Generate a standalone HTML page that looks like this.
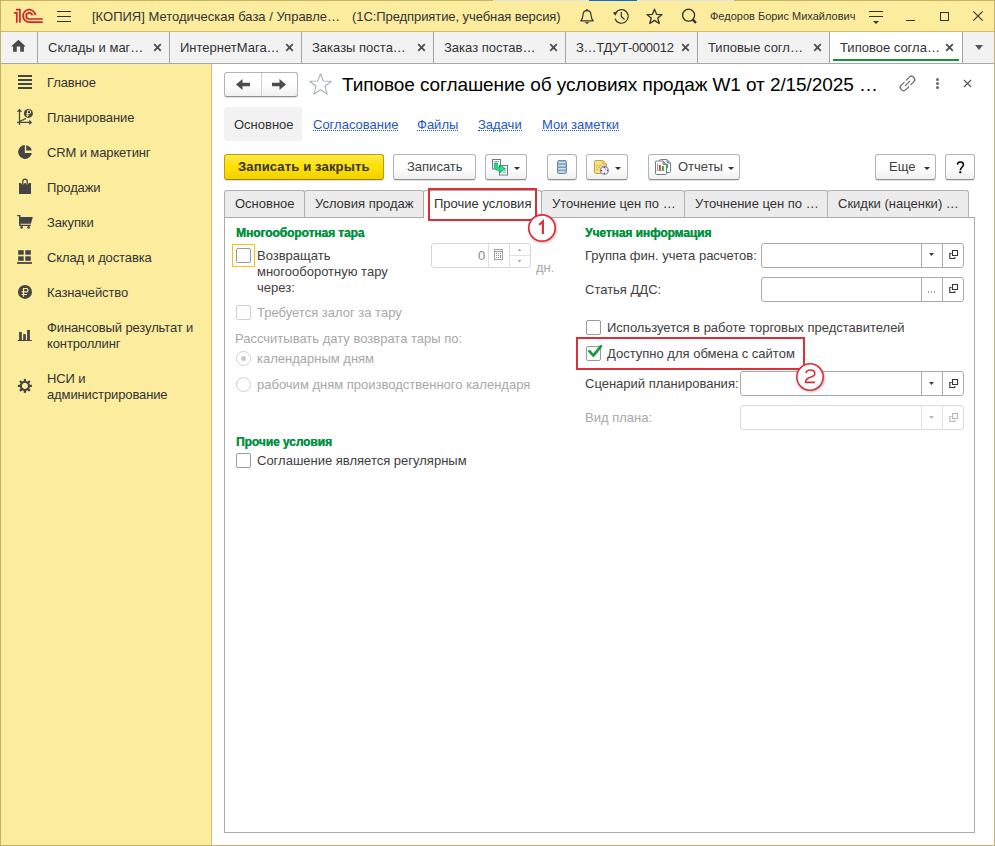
<!DOCTYPE html>
<html><head><meta charset="utf-8">
<style>
*{box-sizing:border-box;margin:0;padding:0}
html,body{width:995px;height:846px;overflow:hidden;background:#fff}
body{position:relative;font-family:"Liberation Sans",sans-serif;font-size:13px;color:#404040}
.a{position:absolute}
.t{position:absolute;white-space:nowrap;line-height:16px}
svg{position:absolute;overflow:visible}
#titlebar{left:0;top:0;width:995px;height:31px;background:#fbec9e}
#tabbar{left:1px;top:31px;width:993px;height:33px;background:#f2f2f2;border-top:1px solid #cdbc6e;border-bottom:1px solid #a8a8a8}
.sep{position:absolute;top:32px;width:1px;height:31px;background:#a3a3a3}
#sidebar{left:1px;top:64px;width:211px;height:781px;background:#fbec9e;border-right:1px solid #d2c27a}
.side{color:#333;letter-spacing:-0.12px}
.tab{color:#333}
.x{position:absolute;width:8px;height:8px}

.btn{border:1px solid #b4b4b4;border-bottom-color:#8f8f8f;border-radius:3px;background:linear-gradient(#fff 0%,#fff 50%,#f0f0f0 100%);box-shadow:0 1px 0 rgba(0,0,0,0.12)}
.ybtn{border:1px solid #b9a000;border-bottom-color:#9a8500;border-radius:3px;background:linear-gradient(#fee94e 0%,#ffe000 50%,#f2d100 100%);box-shadow:0 1px 0 rgba(0,0,0,0.12)}
.dot{width:3px;height:3px;border-radius:50%;background:#6a6a6a}
.lnk{color:#2457c4;border-bottom:1px dotted #2457c4;line-height:16px;height:14px}
.ftab{background:#ececec;border:1px solid #b0b0b0;border-bottom:none;border-radius:3px 3px 0 0}
.grp{color:#00923f;font-weight:bold;font-size:12px;letter-spacing:-0.08px;text-shadow:0.3px 0 0 #00923f}
.cb{width:15px;height:15px;border:1px solid #9a9a9a;border-radius:2px;background:#fff}
.dcb{border-color:#d0d0d0}
.rad{width:15px;height:15px;border:1px solid #d0d0d0;border-radius:50%;background:#fff}
.dis{color:#a8a8a8}
.fld{border:1px solid #a9a9a9;border-radius:3px;background:#fff}
.circ{width:28px;height:28px;border:2px solid #d9303a;border-radius:50%;background:#fff;box-shadow:1px 1px 2px rgba(0,0,0,0.25);color:#d9303a;font-size:18px;line-height:24px;text-align:center}
</style></head><body>
<!-- title bar -->
<div id="titlebar" class="a"></div>
<svg style="left:0;top:0" width="50" height="30" viewBox="0 0 50 30">
  <g fill="none" stroke="#d9232a" stroke-width="1.7">
    <path d="M14 12.8 H16.8 V22.8 M16 9.7 H19.9 V22.8"/>
    <path d="M35.4 15.1 A6.2 6.2 0 1 0 29.2 22.1 H42.8"/>
    <path d="M32.3 15.4 A3.1 3.1 0 1 0 29.2 19 H42.8"/>
  </g>
</svg>
<div class="a" style="left:57px;top:11px;width:14px;height:1px;background:#333"></div>
<div class="a" style="left:57px;top:16px;width:14px;height:1px;background:#333"></div>
<div class="a" style="left:57px;top:21px;width:14px;height:1px;background:#333"></div>
<div class="t" style="left:92px;top:9px;color:#333">[КОПИЯ] Методическая база / Управле…</div>
<div class="t" style="left:352px;top:9px;color:#333;letter-spacing:-0.08px">(1С:Предприятие, учебная версия)</div>
<!-- bell -->
<svg style="left:578px;top:8px" width="18" height="18" viewBox="0 0 18 18">
  <path d="M2.8 12.8 C4 11.5 4.8 10 4.9 7.5 C5 4.6 6.8 2.6 9 2.6 C11.2 2.6 13 4.6 13.1 7.5 C13.2 10 14 11.5 15.2 12.8 Z" fill="none" stroke="#333" stroke-width="1.2" stroke-linejoin="round"/>
  <path d="M8.3 1 h1.4 v2 h-1.4z M6.4 14.2 H11.6 L9 16 Z" fill="#333"/>
</svg>
<!-- history -->
<svg style="left:612px;top:8px" width="18" height="18" viewBox="0 0 18 18">
  <path d="M3.01 10.73 A6.8 6.8 0 1 0 3.83 4.5" fill="none" stroke="#333" stroke-width="1.2"/>
  <path d="M0.9 4.5 L5.6 3.8 L3.3 7.8 Z" fill="#333"/>
  <path d="M9.3 4 V8.5 L12.5 11.5" fill="none" stroke="#333" stroke-width="1.2"/>
</svg>
<!-- star -->
<svg style="left:646px;top:8px" width="18" height="18" viewBox="0 0 18 18">
  <path d="M8.5 1.2 L10.6 6.3 L16 6.6 L11.8 10 L13.2 15.5 L8.5 12.4 L3.8 15.5 L5.2 10 L1 6.6 L6.4 6.3 Z" fill="none" stroke="#333" stroke-width="1.3" stroke-linejoin="round"/>
</svg>
<!-- search -->
<svg style="left:681px;top:8px" width="18" height="18" viewBox="0 0 18 18">
  <circle cx="7.6" cy="7.2" r="6" fill="none" stroke="#333" stroke-width="1.3"/>
  <path d="M11.8 11.6 L15 14.8" stroke="#333" stroke-width="2.4"/>
</svg>
<div class="t" style="left:710px;top:8px;font-size:11px;color:#333">Федоров Борис Михайлович</div>
<!-- filter -->
<svg style="left:868px;top:8px" width="18" height="18" viewBox="0 0 18 18">
  <path d="M1 3.5 H15 M1 8.5 H15" stroke="#333" stroke-width="1.1"/>
  <path d="M5 13 H11 L8 16z" fill="#333"/>
</svg>
<div class="a" style="left:906px;top:20px;width:9px;height:1px;background:#333"></div>
<div class="a" style="left:940px;top:12px;width:9px;height:9px;border:1px solid #333"></div>
<svg style="left:972px;top:10px" width="12" height="12" viewBox="0 0 12 12">
  <path d="M1.3 1.3 L10.7 10.7 M10.7 1.3 L1.3 10.7" stroke="#333" stroke-width="1.1"/>
</svg>

<!-- tab bar -->
<div id="tabbar" class="a"></div>
<div class="sep" style="left:37px"></div>
<div class="sep" style="left:169px"></div>
<div class="sep" style="left:301px"></div>
<div class="sep" style="left:433px"></div>
<div class="sep" style="left:565px"></div>
<div class="sep" style="left:697px"></div>
<div class="sep" style="left:829px"></div>
<div class="sep" style="left:962px"></div>
<div class="a" style="left:830px;top:32px;width:132px;height:31px;background:#fff"></div>
<div class="a" style="left:833px;top:59px;width:126px;height:2px;background:#14923a"></div>
<svg style="left:0;top:32px" width="37" height="31" viewBox="0 0 37 31">
  <path d="M18.4 7.8 L25.8 14.6 H23.9 V19.7 H20.2 V14.6 H16.8 V19.7 H13.1 V14.6 H11 Z" fill="#4a4a4a"/>
</svg>
<div class="t tab" style="left:48px;top:40px">Склады и маг…</div>
<div class="t tab" style="left:180px;top:40px">ИнтернетМага…</div>
<div class="t tab" style="left:312px;top:40px">Заказы поста…</div>
<div class="t tab" style="left:444px;top:40px">Заказ постав…</div>
<div class="t tab" style="left:576px;top:40px;letter-spacing:-0.27px">З…ТДУТ-000012</div>
<div class="t tab" style="left:708px;top:40px">Типовые согл…</div>
<div class="t tab" style="left:840px;top:40px">Типовое согла…</div>
<svg style="left:0;top:0" width="995" height="64" viewBox="0 0 995 64">
  <g stroke="#4d4d4d" stroke-width="1.8">
    <path d="M154.2 44.2 L160.8 50.8 M160.8 44.2 L154.2 50.8"/>
    <path d="M286.2 44.2 L292.8 50.8 M292.8 44.2 L286.2 50.8"/>
    <path d="M418.2 44.2 L424.8 50.8 M424.8 44.2 L418.2 50.8"/>
    <path d="M550.2 44.2 L556.8 50.8 M556.8 44.2 L550.2 50.8"/>
    <path d="M682.2 44.2 L688.8 50.8 M688.8 44.2 L682.2 50.8"/>
    <path d="M814.2 44.2 L820.8 50.8 M820.8 44.2 L814.2 50.8"/>
    <path d="M946.2 44.2 L952.8 50.8 M952.8 44.2 L946.2 50.8"/>
  </g>
  <path d="M975 45 H983 L979 50z" fill="#555"/>
</svg>

<!-- sidebar -->
<div id="sidebar" class="a"></div>

<svg style="left:0;top:0" width="212" height="420" viewBox="0 0 212 420">
 <g fill="#444">
  <rect x="18" y="75" width="14" height="2"/><rect x="18" y="79" width="14" height="2"/>
  <rect x="18" y="83" width="14" height="2"/><rect x="18" y="87" width="14" height="2"/>
 </g>
 <!-- planning -->
 <g stroke="#444" stroke-width="1.2" fill="none">
  <path d="M19.5 111 V125 M17 122.4 H30"/>
  <path d="M20 120.8 L21.5 120.8 L22.5 119.8 L23.5 119.8 L24.5 118.8 L26 118.8"/>
 </g>
 <path d="M19.5 108.8 L22.2 111.8 H16.8 Z M32.2 122.4 L29.2 119.8 V125 Z" fill="#444"/>
 <circle cx="28.4" cy="113.4" r="4.5" fill="#444"/>
 <path d="M27.4 117 V110.6 H29.2 A1.5 1.5 0 0 1 29.2 113.6 H26.3 M26.3 115.2 H29.2" stroke="#fbec9e" stroke-width="0.9" fill="none"/>
 <!-- pie -->
 <path d="M24.8 145.1 A6.9 6.9 0 1 0 31.84 152.9 H24.8 Z" fill="#444"/>
 <path d="M26.2 145.2 A6.9 6.9 0 0 1 31.76 150.6 H26.2 Z" fill="#444"/>
 <!-- bag -->
 <path d="M19 183 H31 V194 H19 Z" fill="#444"/>
 <circle cx="22.8" cy="183.3" r="1.3" fill="#fbec9e"/><circle cx="27.2" cy="183.3" r="1.3" fill="#fbec9e"/>
 <path d="M22.8 184.6 V181.3 A2.2 2.2 0 0 1 27.2 181.3 V184.6" stroke="#444" stroke-width="1.3" fill="none"/>
 <!-- cart -->
 <path d="M17.1 215.6 H19.8 V225.4 H30.8" stroke="#444" stroke-width="1.4" fill="none"/>
 <path d="M19.2 217.1 H32.8 L30.9 223.7 H19.2 Z" fill="#444"/>
 <circle cx="21.6" cy="227.4" r="1.35" fill="#444"/><circle cx="28.6" cy="227.4" r="1.35" fill="#444"/>
 <!-- warehouse -->
 <g fill="#444">
  <rect x="18.2" y="250.2" width="5.5" height="4.5"/><rect x="25.3" y="250.2" width="5.5" height="4.5"/>
  <rect x="18.2" y="256.3" width="5.5" height="4.5"/><rect x="25.3" y="256.3" width="5.5" height="4.5"/>
  <rect x="17.1" y="262.1" width="14.8" height="1.8"/>
 </g>
 <!-- ruble -->
 <circle cx="25" cy="291.9" r="7" fill="#444"/>
 <path d="M23.5 296.8 V288.5 H26.4 A1.65 1.65 0 0 1 26.4 291.8 H21.6 M21.6 294.5 H26.9" stroke="#fbec9e" stroke-width="1.2" fill="none"/>
 <!-- chart -->
 <g fill="#444">
  <rect x="19.1" y="332" width="2.7" height="8.6"/><rect x="23.2" y="334.1" width="2.6" height="6.5"/>
  <rect x="27.1" y="329.9" width="2.8" height="10.7"/><rect x="17.9" y="340" width="14" height="1"/>
 </g>
 <!-- gear -->
 <g transform="translate(24.9 385.9)" fill="#444">
  <circle r="4.1" fill="none" stroke="#444" stroke-width="2.1"/>
  <rect x="-1.1" y="-7" width="2.2" height="3" />
  <rect x="-1.1" y="-7" width="2.2" height="3" transform="rotate(45)"/>
  <rect x="-1.1" y="-7" width="2.2" height="3" transform="rotate(90)"/>
  <rect x="-1.1" y="-7" width="2.2" height="3" transform="rotate(135)"/>
  <rect x="-1.1" y="-7" width="2.2" height="3" transform="rotate(180)"/>
  <rect x="-1.1" y="-7" width="2.2" height="3" transform="rotate(225)"/>
  <rect x="-1.1" y="-7" width="2.2" height="3" transform="rotate(270)"/>
  <rect x="-1.1" y="-7" width="2.2" height="3" transform="rotate(315)"/>
 </g>
</svg>
<div class="t side" style="left:47px;top:75px">Главное</div>
<div class="t side" style="left:47px;top:110px">Планирование</div>
<div class="t side" style="left:47px;top:145px">CRM и маркетинг</div>
<div class="t side" style="left:47px;top:180px">Продажи</div>
<div class="t side" style="left:47px;top:215px">Закупки</div>
<div class="t side" style="left:47px;top:250px">Склад и доставка</div>
<div class="t side" style="left:47px;top:285px">Казначейство</div>
<div class="t side" style="left:47px;top:320px">Финансовый результат и<br>контроллинг</div>
<div class="t side" style="left:47px;top:371px">НСИ и<br>администрирование</div>


<!-- ===== FORM ===== -->
<!-- nav buttons -->
<div class="a btn" style="left:224px;top:72px;width:74px;height:25px"></div>
<div class="a" style="left:261px;top:73px;width:1px;height:23px;background:#d0d0d0"></div>
<svg style="left:224px;top:72px" width="74" height="25" viewBox="0 0 74 25">
  <path d="M12 12.5 L18.5 7 V10.8 H26 V14.2 H18.5 V18 Z" fill="#4d4d4d"/>
  <path d="M62 12.5 L55.5 7 V10.8 H48 V14.2 H55.5 V18 Z" fill="#4d4d4d"/>
</svg>
<svg style="left:308px;top:72px" width="26" height="26" viewBox="0 0 26 26">
  <path d="M12.5 1.8 L15.3 9 L23.3 9.3 L17 14.3 L19.2 22.2 L12.5 17.7 L5.8 22.2 L8 14.3 L1.7 9.3 L9.7 9 Z" fill="none" stroke="#a9b2bb" stroke-width="1.1" stroke-linejoin="round"/>
</svg>
<div class="t" style="left:342px;top:73px;font-size:19px;line-height:24px;color:#000;letter-spacing:-0.08px">Типовое соглашение об условиях продаж W1 от 2/15/2025 …</div>
<svg style="left:898px;top:74px" width="19" height="19" viewBox="0 0 19 19">
  <g fill="none" stroke="#666" stroke-width="1.2" stroke-linecap="round">
    <path d="M8.3 6.2 L11.2 3.3 A2.8 2.8 0 0 1 15.7 7.8 L12.8 10.7"/>
    <path d="M10.7 12.8 L7.8 15.7 A2.8 2.8 0 0 1 3.3 11.2 L6.2 8.3"/>
    <path d="M7.3 11.7 L11.7 7.3"/>
  </g>
</svg>
<div class="a dot" style="left:936px;top:78px"></div>
<div class="a dot" style="left:936px;top:82px"></div>
<div class="a dot" style="left:936px;top:86px"></div>
<svg style="left:963px;top:79px" width="9" height="9" viewBox="0 0 9 9">
  <path d="M1 1 L8 8 M8 1 L1 8" stroke="#555" stroke-width="1.1"/>
</svg>

<!-- nav panel -->
<div class="a" style="left:224px;top:107px;width:78px;height:34px;background:#f2f2f2;border-radius:3px"></div>
<div class="t" style="left:234px;top:117px;color:#333">Основное</div>
<div class="t lnk" style="left:313px;top:117px">Согласование</div>
<div class="t lnk" style="left:417px;top:117px">Файлы</div>
<div class="t lnk" style="left:478px;top:117px">Задачи</div>
<div class="t lnk" style="left:542px;top:117px">Мои заметки</div>

<!-- command bar -->
<div class="a ybtn" style="left:224px;top:154px;width:160px;height:26px"></div>
<div class="t" style="left:238px;top:159px;font-weight:bold;color:#333;letter-spacing:0.15px">Записать и закрыть</div>
<div class="a btn" style="left:393px;top:154px;width:83px;height:26px"></div>
<div class="t" style="left:407px;top:159px;color:#404040">Записать</div>
<div class="a btn" style="left:485px;top:154px;width:42px;height:26px"></div>
<div class="a btn" style="left:547px;top:154px;width:30px;height:26px"></div>
<div class="a btn" style="left:586px;top:154px;width:42px;height:26px"></div>
<div class="a btn" style="left:648px;top:154px;width:92px;height:26px"></div>
<div class="t" style="left:678px;top:159px;color:#404040">Отчеты</div>
<div class="a btn" style="left:875px;top:154px;width:61px;height:26px"></div>
<div class="t" style="left:889px;top:159px;color:#404040">Еще</div>
<div class="a btn" style="left:945px;top:154px;width:30px;height:26px"></div>
<svg style="left:0;top:0" width="995" height="200" viewBox="0 0 995 200"><path d="M957.4 164.6 Q957.6 161.9 960.4 161.9 Q963.4 161.9 963.4 164.5 Q963.4 166.2 961.6 167.7 Q960.3 168.9 960.3 170.2" fill="none" stroke="#000" stroke-width="1.5"/><rect x="959.3" y="171.3" width="2" height="1.9" fill="#000"/></svg>
<svg style="left:0;top:0" width="995" height="200" viewBox="0 0 995 200">
  <path d="M514 167 H520 L517 170z M615 167 H621 L618 170z M728 167 H734 L731 170z M924 167 H930 L927 170z" fill="#333"/>
  <!-- copy-ish icon -->
  <rect x="492.5" y="159.5" width="8" height="9.5" fill="#fff" stroke="#6a7a8c" stroke-width="1"/>
  <rect x="499.5" y="165.5" width="8" height="9.5" fill="#fff" stroke="#6a7a8c" stroke-width="1"/>
  <path d="M494 161.5 H499 M503.8 168.5 H506.2 M503.8 170.5 H506.2 M502.8 172.5 H506.2" stroke="#8a98a8" stroke-width="0.8"/>
  <path d="M494.3 163 H497.6 V166.3 Q497.6 167.3 498.8 167.3 H500 V164.6 L505.4 168.7 L500 172.8 V170.4 H498.4 Q494.3 170.4 494.3 166.4 Z" fill="#22dd80" stroke="#17a55e" stroke-width="0.7"/>
  <!-- list icon -->
  <rect x="557.5" y="160.5" width="9" height="13" rx="1.6" fill="#7f9db8" stroke="#6a8aa8" stroke-width="1"/>
  <g fill="#cfe1ef"><rect x="558.3" y="161.6" width="7.4" height="1.6"/><rect x="558.3" y="164.8" width="7.4" height="1.6"/><rect x="558.3" y="168" width="7.4" height="1.6"/><rect x="558.3" y="171.2" width="7.4" height="1.6"/></g>
  <!-- report clock icon -->
  <path d="M594.5 172.5 V161.5 Q594.5 160.5 595.5 160.5 H603 L606.5 164 V172.5 Q606.5 173.5 605.5 173.5 H595.5 Q594.5 173.5 594.5 172.5 Z" fill="#f6e08c" stroke="#c9a43c" stroke-width="1"/>
  <path d="M603 160.8 V163.2 Q603 164 603.8 164 H606.2" fill="#f0d98a" stroke="#c9a43c" stroke-width="0.9"/>
  <path d="M596 165.6 H598 M599 165.6 H601.5 M596 167.6 H597 M598 167.6 H600 M596 169.6 H598.5" stroke="#d4b050" stroke-width="0.9"/>
  <circle cx="604.4" cy="170.4" r="3.9" fill="#fff" stroke="#6d94c2" stroke-width="1.3"/>
  <path d="M604.4 170.6 L605.6 167.6 L606.4 169.4 Z" fill="#8aa8d8"/>
  <g fill="#e01818"><circle cx="604.4" cy="167.5" r="0.75"/><circle cx="604.4" cy="173.3" r="0.75"/><circle cx="601.5" cy="170.4" r="0.75"/><circle cx="607.3" cy="170.4" r="0.75"/></g>
  <!-- reports icon -->
  <path d="M659.5 171.5 V160.5 Q659.5 159.5 660.5 159.5 H667 L670.5 163 V171.5 Q670.5 172.5 669.5 172.5 H660.5 Q659.5 172.5 659.5 171.5 Z" fill="#fff" stroke="#6f7d8c" stroke-width="1"/>
  <path d="M667 159.8 V162.2 Q667 163 667.8 163 H670.2" fill="#9aa6b2" stroke="#6f7d8c" stroke-width="0.9"/>
  <rect x="666.3" y="164" width="1.7" height="4.2" fill="#3aa03a"/>
  <path d="M655.5 173.5 V162 Q655.5 161 656.5 161 H663 L666.5 164.5 V173.5 Q666.5 174.5 665.5 174.5 H656.5 Q655.5 174.5 655.5 173.5 Z" fill="#fff" stroke="#6f7d8c" stroke-width="1"/>
  <path d="M663 161.3 V163.7 Q663 164.5 663.8 164.5 H666.2" fill="#9aa6b2" stroke="#6f7d8c" stroke-width="0.9"/>
  <path d="M657.5 163.5 V170.5 H664.5" fill="none" stroke="#8a8a8a" stroke-width="0.8"/>
  <rect x="659" y="165" width="1.8" height="5.2" fill="#e83a2a"/>
  <rect x="662" y="166" width="1.8" height="4.2" fill="#30a030"/>
</svg>

<!-- form tabs -->
<div class="a ftab" style="left:224px;top:190px;width:81px;height:28px"></div>
<div class="a ftab" style="left:304px;top:190px;width:120px;height:28px"></div>
<div class="a ftab" style="left:541px;top:190px;width:144px;height:28px"></div>
<div class="a ftab" style="left:684px;top:190px;width:144px;height:28px"></div>
<div class="a ftab" style="left:827px;top:190px;width:142px;height:28px"></div>
<div class="a" style="left:224px;top:217px;width:751px;height:616px;border:1px solid #acacac"></div>
<div class="a" style="left:423px;top:190px;width:119px;height:28px;background:#fff;border:1px solid #acacac;border-bottom:none;border-radius:3px 3px 0 0"></div>
<div class="t" style="left:235px;top:196px;color:#333">Основное</div>
<div class="t" style="left:315px;top:196px;color:#333">Условия продаж</div>
<div class="t" style="left:434px;top:196px;color:#333">Прочие условия</div>
<div class="t" style="left:552px;top:196px;color:#333">Уточнение цен по …</div>
<div class="t" style="left:695px;top:196px;color:#333">Уточнение цен по …</div>
<div class="t" style="left:838px;top:196px;color:#333">Скидки (наценки) …</div>

<!-- left column -->
<div class="t grp" style="left:236px;top:225px">Многооборотная тара</div>
<div class="a" style="left:232px;top:244px;width:23px;height:23px;border:1px solid #f5c300"></div>
<div class="a cb" style="left:236px;top:248px"></div>
<div class="t" style="left:257px;top:248px">Возвращать<br>многооборотную тару<br>через:</div>
<div class="a" style="left:431px;top:243px;width:100px;height:25px;border:1px solid #d6d6d6;border-radius:3px"></div>
<div class="a" style="left:488px;top:244px;width:1px;height:23px;background:#e0e0e0"></div>
<div class="a" style="left:509px;top:244px;width:1px;height:23px;background:#e0e0e0"></div>
<div class="a" style="left:510px;top:255px;width:20px;height:1px;background:#e0e0e0"></div>
<div class="t" style="left:478px;top:248px;color:#888">0</div>
<svg style="left:0;top:0" width="600" height="300" viewBox="0 0 600 300">
  <rect x="494.5" y="249.5" width="8" height="10" fill="none" stroke="#a0a0a0" stroke-width="1"/>
  <path d="M495 251.5 H502" stroke="#a0a0a0" stroke-width="1.2"/>
  <g fill="#8c8c8c"><rect x="496" y="253" width="1" height="1"/><rect x="498" y="253" width="1" height="1"/><rect x="500" y="253" width="1" height="1"/><rect x="496" y="255" width="1" height="1"/><rect x="498" y="255" width="1" height="1"/><rect x="500" y="255" width="1" height="3"/><rect x="496" y="257" width="1" height="1"/><rect x="498" y="257" width="1" height="1"/></g>
  <path d="M517.6 251 H521.4 L519.5 248.8 Z M517.6 260 H521.4 L519.5 262.2 Z" fill="#a4a4a4"/>
</svg>
<div class="t dis" style="left:536px;top:260px">дн.</div>
<div class="a cb dcb" style="left:236px;top:305px"></div>
<div class="t dis" style="left:257px;top:305px">Требуется залог за тару</div>
<div class="t dis" style="left:235px;top:331px">Рассчитывать дату возврата тары по:</div>
<div class="a rad" style="left:236px;top:351px"></div>
<div class="a" style="left:241px;top:356px;width:5px;height:5px;border-radius:50%;background:#c8c8c8"></div>
<div class="t dis" style="left:257px;top:351px">календарным дням</div>
<div class="a rad" style="left:236px;top:377px"></div>
<div class="t dis" style="left:257px;top:377px">рабочим дням производственного календаря</div>
<div class="t grp" style="left:236px;top:434px">Прочие условия</div>
<div class="a cb" style="left:236px;top:453px"></div>
<div class="t" style="left:257px;top:453px">Соглашение является регулярным</div>

<!-- right column -->
<div class="t grp" style="left:585px;top:225px">Учетная информация</div>
<div class="t" style="left:585px;top:248px">Группа фин. учета расчетов:</div>
<div class="a fld" style="left:761px;top:243px;width:203px;height:25px"></div>
<div class="a" style="left:921px;top:244px;width:1px;height:23px;background:#a8a8a8"></div>
<div class="a" style="left:942px;top:244px;width:1px;height:23px;background:#a8a8a8"></div>
<div class="t" style="left:585px;top:282px">Статья ДДС:</div>
<div class="a fld" style="left:761px;top:277px;width:203px;height:25px"></div>
<div class="a" style="left:921px;top:278px;width:1px;height:23px;background:#a8a8a8"></div>
<div class="a" style="left:942px;top:278px;width:1px;height:23px;background:#a8a8a8"></div>
<div class="a cb" style="left:586px;top:320px"></div>
<div class="t" style="left:607px;top:320px">Используется в работе торговых представителей</div>
<div class="a cb" style="left:586px;top:346px"></div>
<svg style="left:586px;top:343px" width="18" height="18" viewBox="0 0 18 18">
  <path d="M3.4 8.2 L7.4 12.6 L15 3.2" fill="none" stroke="#129a46" stroke-width="2.7" stroke-linecap="round" stroke-linejoin="round"/>
</svg>
<div class="t" style="left:607px;top:346px">Доступно для обмена с сайтом</div>
<div class="t" style="left:585px;top:376px">Сценарий планирования:</div>
<div class="a fld" style="left:740px;top:371px;width:224px;height:25px"></div>
<div class="a" style="left:921px;top:372px;width:1px;height:23px;background:#a8a8a8"></div>
<div class="a" style="left:942px;top:372px;width:1px;height:23px;background:#a8a8a8"></div>
<div class="t dis" style="left:585px;top:410px">Вид плана:</div>
<div class="a fld" style="left:740px;top:405px;width:224px;height:25px;border-color:#dadada"></div>
<div class="a" style="left:921px;top:406px;width:1px;height:23px;background:#e2e2e2"></div>
<div class="a" style="left:942px;top:406px;width:1px;height:23px;background:#e2e2e2"></div>
<svg style="left:0;top:0" width="995" height="440" viewBox="0 0 995 440">
  <path d="M929 253 H934 L931.5 256z M929 382 H934 L931.5 385z" fill="#404040"/>
  <path d="M929 416 H934 L931.5 419z" fill="#b8b8b8"/>
  <g fill="none" stroke="#333" stroke-width="1.1">
    <path d="M952.5 250.5 h5 v5 h-5z M951.5 253.5 h-1.7 v5 h5 v-1.4"/>
    <path d="M952.5 284.5 h5 v5 h-5z M951.5 287.5 h-1.7 v5 h5 v-1.4"/>
    <path d="M952.5 379.5 h5 v5 h-5z M951.5 382.5 h-1.7 v5 h5 v-1.4"/>
  </g>
  <g fill="none" stroke="#b8b8b8" stroke-width="1.1">
    <path d="M952.5 413.5 h5 v5 h-5z M951.5 416.5 h-1.7 v5 h5 v-1.4"/>
  </g>
  <path d="M928 292 h1 M931 292 h1 M934 292 h1" stroke="#404040" stroke-width="1.2"/>
</svg>

<!-- annotations -->
<div class="a" style="left:428px;top:188px;width:109px;height:33px;border:2px solid #d9303a"></div>
<div class="a" style="left:576px;top:337px;width:229px;height:33px;border:2px solid #d9303a"></div>
<svg style="left:0;top:0" width="995" height="420" viewBox="0 0 995 420">
 <defs><filter id="sh" x="-30%" y="-30%" width="160%" height="160%"><feDropShadow dx="0.8" dy="1" stdDeviation="1" flood-color="#000" flood-opacity="0.28"/></filter></defs>
 <circle cx="542" cy="228" r="13.2" fill="#fff" stroke="#d9303a" stroke-width="1.7" filter="url(#sh)"/>
 <path d="M539.2 224.7 L542.9 221.4 V233.9" fill="none" stroke="#d9303a" stroke-width="2.2"/>
 <circle cx="810" cy="377" r="13.2" fill="#fff" stroke="#d9303a" stroke-width="1.6" filter="url(#sh)"/>
 <path d="M806.1 373 Q806.6 370 810.3 370 Q814.8 370 814.8 373.4 Q814.8 375.9 810.2 377.3 Q805.6 378.8 805.6 382.3 H815" fill="none" stroke="#d9303a" stroke-width="1.7"/>
</svg>

<!-- window frame -->
<div class="a" style="left:0;top:0;width:995px;height:846px;border:1px solid #c4b366"></div>
<div class="a" style="left:493px;top:0;width:96px;height:1px;background:#e4e4e4"></div>
<div class="a" style="left:589px;top:0;width:48px;height:1px;background:#0a6cd0"></div>
<div class="a" style="left:637px;top:0;width:97px;height:1px;background:#e4e4e4"></div>
</body></html>
